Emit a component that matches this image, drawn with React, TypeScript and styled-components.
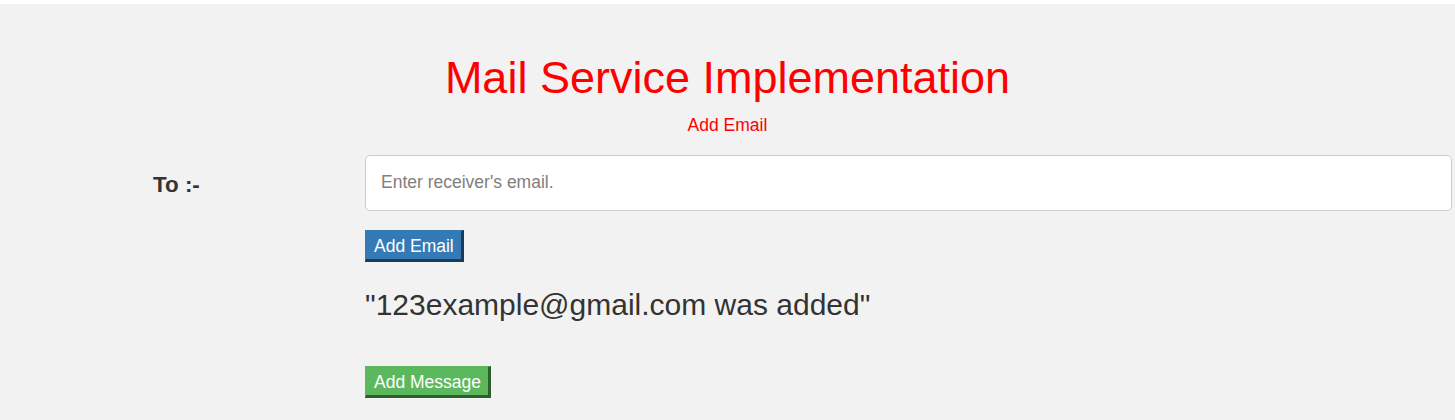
import { createGlobalStyle } from "styled-components";
import styled from "styled-components";

const GlobalStyle = createGlobalStyle`
  html, body {
    margin: 0;
    padding: 0;
    background: #ffffff;
  }
  body {
    font-family: "Liberation Sans", Arial, Helvetica, sans-serif;
    color: #333333;
  }
`;

const Page = styled.div`
  margin-top: 4px;
  min-height: 416px;
  background-color: #f2f2f2;
  padding-top: 49px;
  box-sizing: border-box;
`;

const Title = styled.h1`
  margin: 0;
  text-align: center;
  color: #ff0000;
  font-size: 45px;
  font-weight: 400;
  line-height: 1.1;
`;

const SubTitle = styled.div`
  margin-top: 10px;
  text-align: center;
  color: #ff0000;
  font-size: 17.5px;
  line-height: 25px;
`;

const FormRow = styled.div`
  display: grid;
  grid-template-columns: 365px 1fr;
  align-items: center;
  margin-top: 17px;
  padding-right: 3px;
`;

const Label = styled.label`
  padding: 4px 0 0 153px;
  font-size: 22.4px;
  font-weight: 700;
  color: #333333;
`;

const EmailInput = styled.input`
  box-sizing: border-box;
  width: 100%;
  height: 56px;
  padding: 0 15px;
  border: 1px solid #cccccc;
  border-radius: 5px;
  background: #ffffff;
  font-family: "Liberation Sans", Arial, sans-serif;
  font-size: 17.5px;
  color: #555555;
  outline: none;

  &::placeholder {
    color: #808080;
  }
`;

const Body = styled.div`
  padding-left: 365px;
  display: flex;
  flex-direction: column;
  align-items: flex-start;
`;

const ActionButton = styled.button<{ $bg: string; $shade: string }>`
  font-family: "Liberation Sans", Arial, sans-serif;
  font-size: 17.5px;
  line-height: 21px;
  color: #ffffff;
  background-color: ${(p) => p.$bg};
  padding: 5px 7px 2px 8px;
  border-style: solid;
  border-width: 1px 3px 3px 1px;
  border-color: ${(p) => p.$bg} ${(p) => p.$shade} ${(p) => p.$shade} ${(p) => p.$bg};
  border-radius: 0;
  cursor: pointer;
`;

const AddEmailButton = styled(ActionButton)`
  margin-top: 19px;
`;

const AddMessageButton = styled(ActionButton)`
  margin-top: 45px;
`;

const Notice = styled.h3`
  margin: 26px 0 0;
  font-size: 30px;
  font-weight: 400;
  line-height: 1.1;
  color: #333333;
`;

function App() {
  return (
    <>
      <GlobalStyle />
      <Page>
        <Title>Mail Service Implementation</Title>
        <SubTitle>Add Email</SubTitle>
        <FormRow>
          <Label htmlFor="to">To :-</Label>
          <EmailInput id="to" type="email" placeholder="Enter receiver's email." />
        </FormRow>
        <Body>
          <AddEmailButton $bg="#337ab7" $shade="#1b3b58">
            Add Email
          </AddEmailButton>
          <Notice>"123example@gmail.com was added"</Notice>
          <AddMessageButton $bg="#5cb85c" $shade="#2e5e2e">
            Add Message
          </AddMessageButton>
        </Body>
      </Page>
    </>
  );
}

export default App;
